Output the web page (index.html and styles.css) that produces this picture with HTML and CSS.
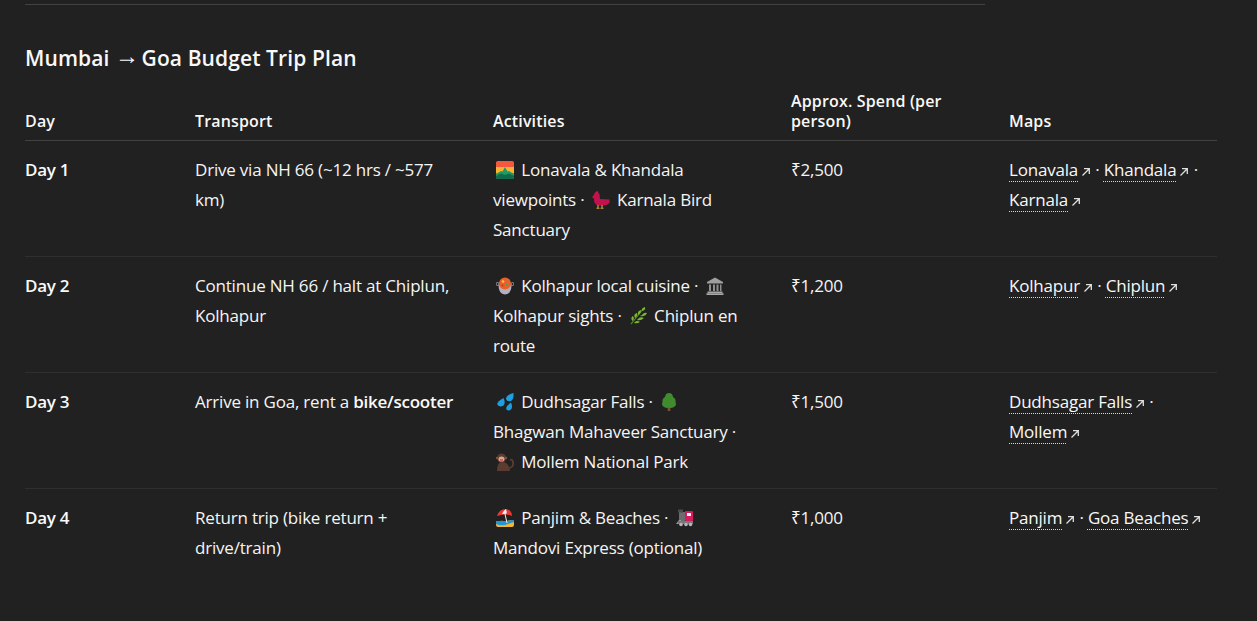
FILE: index.html
```html
<!DOCTYPE html>
<html lang="en">
<head>
  <meta charset="UTF-8">
  <title>Mumbai to Goa Budget Trip Plan</title>
  <link rel="stylesheet" href="styles.css">
</head>
<body>

  <svg class="sprites" width="0" height="0">
    <defs>
      <symbol id="ext" viewBox="0 0 10 10">
        <path d="M1.5 8.5 L8 2 M3 1.7 H8.3 V7" fill="none" stroke="currentColor" stroke-width="1.3"/>
      </symbol>
      <symbol id="e-mountain" viewBox="0 0 18 18">
        <rect width="18" height="18" rx="2.5" fill="#f2603c"/>
        <path d="M0 2.5 A2.5 2.5 0 0 1 2.5 0 H15.5 A2.5 2.5 0 0 1 18 2.5 V6 H0Z" fill="#f4593f"/>
        <path d="M0 6 H18 V12 H0Z" fill="#f9b233"/>
        <path d="M0 13 L5 10 L6.5 10.5 L9 6 L11.5 10.5 L13 10 L18 13 V15.5 A2.5 2.5 0 0 1 15.5 18 H2.5 A2.5 2.5 0 0 1 0 15.5Z" fill="#1f9a63"/>
        <path d="M0 15 L5 12.5 L9 14 L13 12.5 L18 15 V15.5 A2.5 2.5 0 0 1 15.5 18 H2.5 A2.5 2.5 0 0 1 0 15.5Z" fill="#0f6b4c"/>
      </symbol>
      <symbol id="e-bird" viewBox="0 0 18 18">
        <path d="M1 5 L3 1.5 Q6 0 7.5 3 L8 8 L17.5 8.5 V12 Q15 14.5 11 14.5 H6 Q1.5 13 2 7.5 L0 6.5Z" fill="#c2124d"/>
        <path d="M3 1.5 L5.5 0 L6 1.5Z" fill="#e0245e"/>
        <path d="M6 14 V17 M10 14 V17 M4.5 17.3 H7.5 M8.5 17.3 H11.5" stroke="#d9a53a" stroke-width="1.1" fill="none"/>
      </symbol>
      <symbol id="e-pot" viewBox="0 0 18 18">
        <circle cx="1.5" cy="7" r="1.5" fill="none" stroke="#9b93a0"/>
        <circle cx="16.5" cy="7" r="1.5" fill="none" stroke="#9b93a0"/>
        <path d="M2.5 8 H15.5 Q15.5 17 9 17.5 Q2.5 17 2.5 8Z" fill="#b7afbd"/>
        <circle cx="9" cy="6.5" r="6" fill="#e8612c"/>
        <circle cx="7" cy="4.5" r="1.3" fill="#f5c242"/>
        <circle cx="11" cy="7.5" r="1.3" fill="#5f9e3f"/>
        <circle cx="6.5" cy="8.5" r="1" fill="#c33"/>
      </symbol>
      <symbol id="e-bank" viewBox="0 0 18 18">
        <path d="M9 0.5 L17 5 V6.5 H1 V5Z" fill="#9e9e9e"/>
        <path d="M3 7.5 H5 V14 H3Z M7 7.5 H9 V14 H7Z M10.5 7.5 H12.5 V14 H10.5Z M14 7.5 H15.5 V14 H14Z" fill="#8f8f8f"/>
        <path d="M1.5 14.5 H16.5 V16 H1.5Z M0.5 16.3 H17.5 V18 H0.5Z" fill="#a8a8a8"/>
      </symbol>
      <symbol id="e-herb" viewBox="0 0 18 18">
        <path d="M2 17 Q7 11 14 2" stroke="#4a8f22" stroke-width="1.2" fill="none"/>
        <path d="M13 4 Q12 1 16 0 Q17 3 13 4Z M9 8 Q8 4 12 3 Q12 7 9 8Z M13 8 Q15 5 18 6 Q16 10 11 9Z M6 11 Q4 7 8 6 Q9 9 6 11Z M9 12 Q11 9 15 11 Q12 14 8 13Z M3.5 14 Q1 11 4 9 Q6 12 3.5 14Z M6 15 Q8 13 11 15 Q8 17 5 16Z" fill="#7cb82f"/>
      </symbol>
      <symbol id="e-drops" viewBox="0 0 18 18">
        <path d="M17.5 0 Q18 6 15 8 Q11 9 10 6 Q10 2 17.5 0Z" fill="#1d9fe0"/>
        <path d="M7.5 5 Q10 10 7.5 12.5 Q4 14.5 1.5 12 Q0 9 7.5 5Z" fill="#1d9fe0"/>
        <path d="M15 9.5 Q17 14 15 16.5 Q12.5 18.5 10.5 16.5 Q9 14 15 9.5Z" fill="#1d9fe0"/>
      </symbol>
      <symbol id="e-tree" viewBox="0 0 18 18">
        <rect x="7.7" y="13" width="2.6" height="5" fill="#7a5230"/>
        <path d="M9 0 Q12.5 0 13 4 Q16 5.5 15.5 9 Q17 12 14 14 Q11 15.5 9 14.5 Q7 15.5 4 14 Q1 12 2.5 9 Q2 5.5 5 4 Q5.5 0 9 0Z" fill="#3f8b2e"/>
      </symbol>
      <symbol id="e-monkey" viewBox="0 0 18 18">
        <path d="M12 15 Q18 15 17 9 Q16.5 6 14 7" stroke="#5a3d30" stroke-width="1.8" fill="none"/>
        <path d="M1 18 Q1 9 6 9 Q13 9 14 18Z" fill="#5a3d30"/>
        <circle cx="5.5" cy="5" r="4.5" fill="#5a3d30"/>
        <circle cx="1" cy="5" r="1.2" fill="#7a5645"/>
        <circle cx="10" cy="5" r="1.2" fill="#7a5645"/>
        <ellipse cx="5.5" cy="6" rx="3" ry="2.6" fill="#e0a585"/>
        <path d="M4 7 H7" stroke="#c2185b" stroke-width="1"/>
      </symbol>
      <symbol id="e-beach" viewBox="0 0 18 18">
        <path d="M0 14 Q5 10 9 13 Q14 10 18 12 V16 Q18 18 16 18 H2 Q0 18 0 16Z" fill="#f2b632"/>
        <path d="M0 15 Q4 17 9 16 L18 13 V11 L10 12 Q4 12 0 12Z" fill="#1f96d8"/>
        <path d="M1 7 Q3 0 10 0 Q16 1 16 7 Q10 4 1 7Z" fill="#e53935"/>
        <path d="M6 5 Q7 2 10 0 Q11 3 10.5 4.8Z" fill="#f5f5f5"/>
        <path d="M9 5 L11 14" stroke="#eee" stroke-width="1"/>
      </symbol>
      <symbol id="e-train" viewBox="0 0 18 18">
        <rect x="3" y="3" width="6" height="9" fill="#6b6b70"/>
        <rect x="2" y="0.5" width="5" height="3" fill="#4a4a50"/>
        <rect x="9" y="2" width="8" height="10" rx="1" fill="#d81b60"/>
        <rect x="11" y="4" width="4" height="3" fill="#f4f4f4"/>
        <path d="M0 15 L3 11 H5 V15Z" fill="#9a9aa0"/>
        <rect x="2" y="12" width="15" height="3" fill="#77777c"/>
        <circle cx="5" cy="15.5" r="1.8" fill="#b5b5ba"/>
        <circle cx="10" cy="15.5" r="1.8" fill="#b5b5ba"/>
        <circle cx="14.5" cy="15.5" r="1.8" fill="#b5b5ba"/>
      </symbol>
    </defs>
  </svg>

  <hr class="rule">

  <h3 class="plan-title">Mumbai <span class="arrow">→</span> Goa Budget Trip Plan</h3>

  <table class="plan">
    <thead>
      <tr>
        <th class="col-day">Day</th>
        <th class="col-transport">Transport</th>
        <th class="col-activities">Activities</th>
        <th class="col-spend">Approx. Spend (per person)</th>
        <th class="col-maps">Maps</th>
      </tr>
    </thead>
    <tbody>
      <tr>
        <td><strong>Day 1</strong></td>
        <td>Drive via NH 66 (~12 hrs / ~577 km)</td>
        <td><svg class="emoji"><use href="#e-mountain"/></svg> Lonavala &amp; Khandala viewpoints · <svg class="emoji"><use href="#e-bird"/></svg> Karnala Bird Sanctuary</td>
        <td>₹2,500</td>
        <td><a class="map-link" href="#">Lonavala</a><svg class="ext"><use href="#ext"/></svg> · <a class="map-link" href="#">Khandala</a><svg class="ext"><use href="#ext"/></svg> · <a class="map-link" href="#">Karnala</a><svg class="ext"><use href="#ext"/></svg></td>
      </tr>
      <tr>
        <td><strong>Day 2</strong></td>
        <td>Continue NH 66 / halt at Chiplun, Kolhapur</td>
        <td><svg class="emoji"><use href="#e-pot"/></svg> Kolhapur local cuisine · <svg class="emoji"><use href="#e-bank"/></svg> Kolhapur sights · <svg class="emoji"><use href="#e-herb"/></svg> Chiplun en route</td>
        <td>₹1,200</td>
        <td><a class="map-link" href="#">Kolhapur</a><svg class="ext"><use href="#ext"/></svg> · <a class="map-link" href="#">Chiplun</a><svg class="ext"><use href="#ext"/></svg></td>
      </tr>
      <tr>
        <td><strong>Day 3</strong></td>
        <td>Arrive in Goa, rent a <strong>bike/scooter</strong></td>
        <td><svg class="emoji"><use href="#e-drops"/></svg> Dudhsagar Falls · <svg class="emoji"><use href="#e-tree"/></svg> Bhagwan Mahaveer Sanctuary · <svg class="emoji"><use href="#e-monkey"/></svg> Mollem National Park</td>
        <td>₹1,500</td>
        <td><a class="map-link" href="#">Dudhsagar Falls</a><svg class="ext"><use href="#ext"/></svg> · <a class="map-link" href="#">Mollem</a><svg class="ext"><use href="#ext"/></svg></td>
      </tr>
      <tr>
        <td><strong>Day 4</strong></td>
        <td>Return trip (bike return + drive/train)</td>
        <td><svg class="emoji"><use href="#e-beach"/></svg> Panjim &amp; Beaches · <svg class="emoji"><use href="#e-train"/></svg> Mandovi Express (optional)</td>
        <td>₹1,000</td>
        <td><a class="map-link" href="#">Panjim</a><svg class="ext"><use href="#ext"/></svg> · <a class="map-link" href="#">Goa Beaches</a><svg class="ext"><use href="#ext"/></svg></td>
      </tr>
    </tbody>
  </table>

</body>
</html>
```

FILE: styles.css
```css
html {
  background-color: #212121;
}
body {
  margin: 0;
  padding: 4px 40px 0 25px;
  font-family: "Open Sans", "Noto Sans", sans-serif;
  font-size: 17px;
  line-height: 30px;
  letter-spacing: -0.2px;
  color: #f5f5f5;
}
.sprites {
  display: block;
  height: 0;
}
.rule {
  width: 960px;
  margin: 0;
  border: none;
  border-top: 1px solid #424242;
}
.plan-title {
  margin: 37px 0 17px;
  font-size: 21px;
  line-height: 32px;
  font-weight: 600;
  letter-spacing: 0.1px;
  color: #f8f8f8;
}
.arrow {
  font-family: "Liberation Sans", sans-serif;
  font-size: 24px;
  line-height: 0;
  font-weight: 400;
  letter-spacing: -3px;
  vertical-align: 2px;
}
.plan {
  width: 1192px;
  table-layout: fixed;
  border-collapse: collapse;
}
.plan th {
  box-sizing: border-box;
  padding: 0 40px 9px 0;
  border-bottom: 1px solid #424242;
  text-align: left;
  vertical-align: bottom;
  font-size: 16px;
  line-height: 20px;
  font-weight: 600;
  letter-spacing: 0.15px;
  color: #f8f8f8;
}
.plan td {
  padding: 14px 40px 11px 0;
  border-bottom: 1px solid #2f2f2f;
  vertical-align: top;
}
.plan td:nth-child(2) {
  padding-right: 28px;
}
.plan td:last-child {
  padding-right: 8px;
}
.plan tr:last-child td {
  border-bottom: none;
}
.plan strong {
  font-weight: 600;
  letter-spacing: -0.25px;
  color: #fafafa;
}
.col-day { width: 170px; }
.col-transport { width: 298px; }
.col-activities { width: 298px; }
.col-spend { width: 218px; }
.col-maps { width: 208px; }
.emoji {
  width: 18px;
  height: 18px;
  margin: 0 3px;
  vertical-align: -3px;
}
.map-link {
  color: #f8f8f8;
  text-decoration: underline dotted 1px;
  text-underline-offset: 5px;
  text-decoration-color: #d8d8d8;
}
.ext {
  width: 10px;
  height: 10px;
  margin-left: 3px;
  color: #e0e0e0;
  vertical-align: -1px;
}
```
